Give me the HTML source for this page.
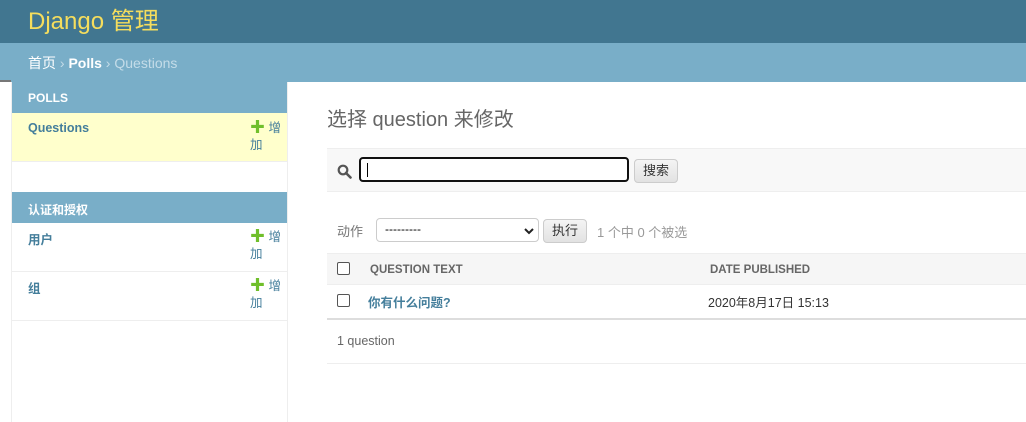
<!DOCTYPE html>
<html><head><meta charset="utf-8"><style>
*{box-sizing:border-box;margin:0;padding:0}
body{width:1026px;height:420px;overflow:hidden;background:#fff;font-family:"Liberation Sans","Noto Sans CJK SC",sans-serif;font-size:13px;color:#333;position:relative}
.hdr{position:absolute;left:0;top:0;width:1026px;height:43px;background:#417690}
.hdr span{position:absolute;left:28px;top:1px;font-size:24px;color:#f5dd5d}
.bc{position:absolute;left:0;top:43px;width:1026px;height:39px;background:#79aec8;color:#c4dce8;font-size:14px;padding:10px 0 0 28px}
.bc .h{color:#fff}
.bc .p{color:#fff;font-weight:bold}
.line{position:absolute;left:0;top:80px;width:11px;height:2px;background:#777}
.side{position:absolute;left:11px;top:82px;width:277px;height:340px;border-right:1px solid #eee;border-left:1px solid #eee}
.cap{height:31px;background:#79aec8;color:#fff;font-size:12px;font-weight:bold;padding:9px 0 0 16px}
.row{height:49px;border-bottom:1px solid #eee;position:relative;padding:8px 0 0 16px;font-size:12.5px;font-weight:bold;color:#447e9b}
.row.y{background:#ffc}
.add{position:absolute;left:238px;top:6px;width:36px;font-weight:normal;color:#447e9b;line-height:17px;font-size:12.5px}
.add i{color:#70bf2b;font-style:normal;font-weight:bold;font-size:15px}
h1{position:absolute;left:327px;top:103px;font-size:20px;font-weight:normal;color:#666}
.tb{position:absolute;left:327px;top:148px;width:700px;height:44px;background:#f8f8f8;border-top:1px solid #eee;border-bottom:1px solid #eee}
.inp{position:absolute;left:32px;top:8px;width:270px;height:25px;border:2px solid #111;border-radius:4px;background:#fff}
.inp:after{content:"";position:absolute;left:6px;top:4px;width:1px;height:14px;background:#000}
.btn{position:absolute;height:24px;border:1px solid #ccc;border-radius:4px;background:linear-gradient(#f4f4f4,#e2e2e2);font-size:13px;color:#333;text-align:center;line-height:22px}
.act{position:absolute;left:337px;top:221px;color:#777;font-size:13px}
.sel{position:absolute;left:376px;top:218px;width:163px;height:24px;border:1px solid #ccc;border-radius:4px;background:#fff;font-size:12px;padding:3px 0 0 8px;color:#000}
.cnt{position:absolute;left:597px;top:222px;color:#999;font-size:13px}
.th{position:absolute;left:327px;top:253px;width:700px;height:32px;background:#f6f6f6;border-top:1px solid #eee;border-bottom:1px solid #eee;font-size:11.5px;font-weight:bold;color:#666}
.cb{position:absolute;width:13px;height:13px;border:1px solid #555;border-radius:2px;background:#fff}
.tr{position:absolute;left:327px;top:285px;width:700px;height:35px;border-bottom:2px solid #ddd}
.ft{position:absolute;left:327px;top:320px;width:700px;height:44px;border-bottom:1px solid #eee;color:#666;padding:14px 0 0 10px;font-size:12.5px}
</style></head><body>
<div class="hdr"><span>Django 管理</span></div>
<div class="bc"><span class="h">首页</span> › <span class="p">Polls</span> › Questions</div>
<div class="line"></div>
<div class="side">
<div class="cap">POLLS</div>
<div class="row y">Questions<div class="add"><i>✚</i> 增加</div></div>
<div style="height:30px"></div>
<div class="cap">认证和授权</div>
<div class="row" style="padding-top:6px">用户<div class="add" style="top:5px"><i>✚</i> 增加</div></div>
<div class="row" style="padding-top:6px">组<div class="add" style="top:5px"><i>✚</i> 增加</div></div>
</div>
<h1>选择 question 来修改</h1>
<div class="tb">
<svg style="position:absolute;left:10px;top:15px" width="15" height="15" viewBox="0 0 15 15"><circle cx="6" cy="6" r="4.3" fill="none" stroke="#555" stroke-width="2.2"/><line x1="9" y1="9" x2="13.5" y2="13.5" stroke="#555" stroke-width="2.6" stroke-linecap="round"/></svg>
<div class="inp"></div>
<div class="btn" style="left:307px;top:10px;width:44px">搜索</div>
</div>
<div class="act">动作</div>
<div class="sel">---------<svg style="position:absolute;right:4px;top:8px" width="10" height="8" viewBox="0 0 10 8"><path d="M1 2l4 4 4-4" fill="none" stroke="#222" stroke-width="2"/></svg></div>
<div class="btn" style="left:543px;top:219px;width:44px">执行</div>
<div class="cnt">1 个中 0 个被选</div>
<div class="th"><div class="cb" style="left:10px;top:8px"></div><span style="position:absolute;left:43px;top:10px">QUESTION TEXT</span><span style="position:absolute;left:383px;top:10px">DATE PUBLISHED</span></div>
<div class="tr"><div class="cb" style="left:10px;top:9px"></div><span style="position:absolute;left:41px;top:7px;font-weight:bold;color:#447e9b;font-size:12.5px">你有什么问题?</span><span style="position:absolute;left:381px;top:7px;font-size:12.5px;color:#333">2020年8月17日 15:13</span></div>
<div class="ft">1 question</div>
</body></html>
